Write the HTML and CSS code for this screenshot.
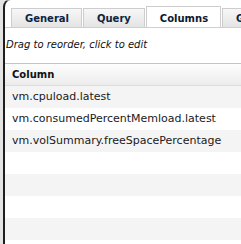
FILE: index.html
```html
<!DOCTYPE html>
<html lang="en">
<head>
    <meta charset="UTF-8" />
    <title>Columns</title>
    <link rel="stylesheet" href="styles.css">
</head>
<body>
    <div class="backdrop"></div>
    <div class="window">
        <div class="tabs">
            <div class="tab">General</div>
            <div class="tab">Query</div>
            <div class="tab active">Columns</div>
            <div class="tab">Grouping</div>
        </div>

        <p class="hint">Drag to reorder, click to edit</p>

        <div class="grid">
            <div class="grid-header">Column</div>
            <div class="row">vm.cpuload.latest</div>
            <div class="row">vm.consumedPercentMemload.latest</div>
            <div class="row">vm.volSummary.freeSpacePercentage</div>
            <div class="row"></div>
            <div class="row"></div>
            <div class="row"></div>
            <div class="row"></div>
            <div class="row"></div>
        </div>
    </div>
</body>
</html>
```

FILE: styles.css
```css
body {
    margin: 0;
    width: 241px;
    height: 244px;
    overflow: hidden;
    display: flex;
    background-color: #e9e6e0;
    font-family: "DejaVu Sans", Verdana, sans-serif;
}

.backdrop {
    width: 3px;
    flex-shrink: 0;
    background-color: #e4e4e4;
}

.window {
    flex: 1;
    min-width: 0;
    overflow: hidden;
    margin-top: -1px;
    background-color: #fff;
    border-left: 2px solid #1e1e1e;
    border-top: 1px solid #8a8a8a;
    border-top-left-radius: 8px;
}

/* tab strip */
.tabs {
    display: flex;
    align-items: flex-end;
    padding: 6px 0 0 6px;
    height: 21px;
    border-bottom: 1px solid #cfcfcf;
    white-space: nowrap;
    overflow: hidden;
}

.tab {
    flex-shrink: 0;
    height: 20px;
    line-height: 20px;
    padding: 0 12px 0 13px;
    margin-right: 1px;
    margin-bottom: -1px;
    font-size: 10px;
    font-weight: bold;
    color: #0d2440;
    background: linear-gradient(#f7f7f7, #e3e3e3);
    border: 1px solid #cdcdcf;
    border-bottom: none;
    box-sizing: border-box;
}

.tab:nth-child(2) {
    padding: 0 13px;
}

.tab.active {
    height: 22px;
    line-height: 23px;
    background: #fff;
    color: #0a1a2e;
    border-bottom: 1px solid #fff;
    margin-bottom: -1px;
}

.hint {
    margin: 0;
    padding: 11px 0 0 1px;
    height: 24px;
    font-size: 10px;
    font-style: italic;
    color: #111;
}

/* columns grid */
.grid {
    border-top: 1px solid #c4c4c4;
}

.grid-header {
    height: 21px;
    line-height: 21px;
    padding-left: 7px;
    font-size: 10px;
    font-weight: bold;
    color: #111;
    background: linear-gradient(#fdfdfd, #ececec);
    border-bottom: 1px solid #dcdcdc;
}

.row {
    height: 22px;
    line-height: 22px;
    padding-left: 7px;
    font-size: 11px;
    color: #1a1a1a;
    white-space: nowrap;
}

.row:nth-child(even) {
    background-color: #f4f4f4;
}
```
